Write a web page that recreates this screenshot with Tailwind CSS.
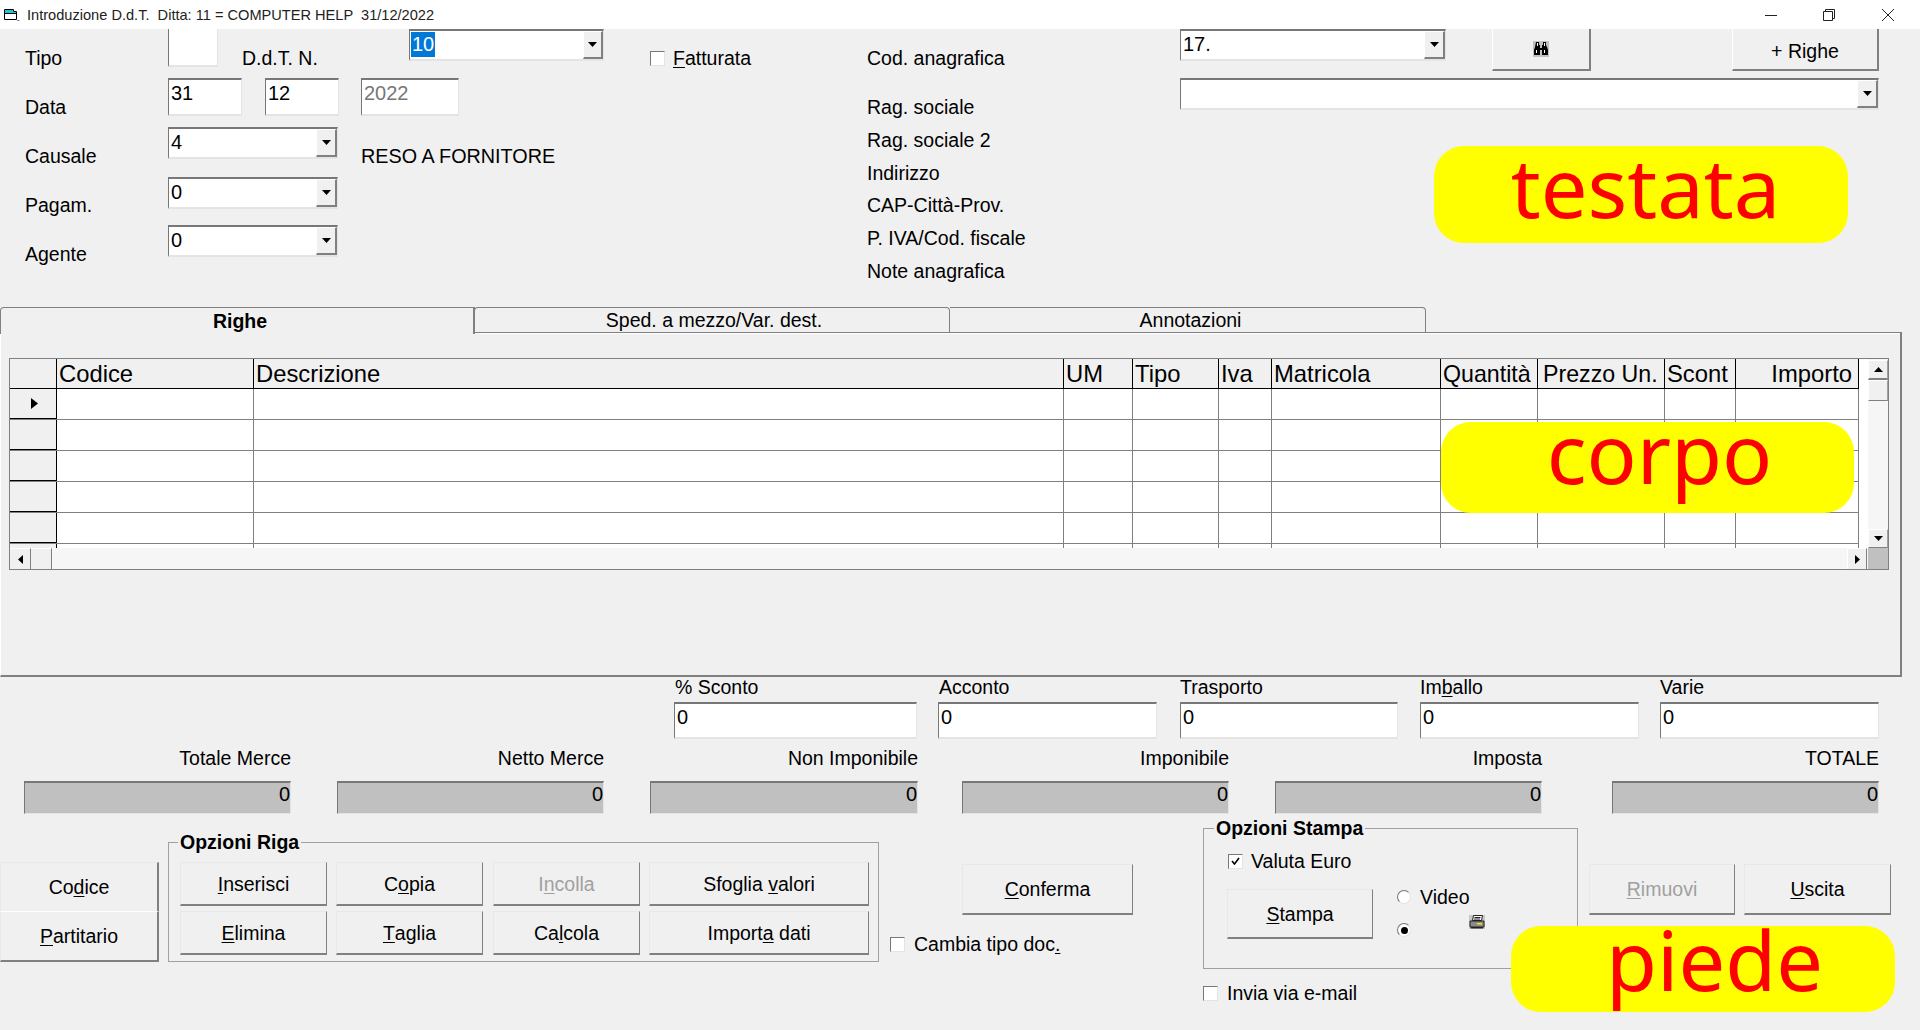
<!DOCTYPE html>
<html lang="it">
<head>
  <meta charset="UTF-8" />
  <title>Introduzione D.d.T.</title>
  <script src="https://cdn.jsdelivr.net/npm/@tailwindcss/browser@4"></script>
</head>
<body class="bg-[#f0f0f0]">
<div class="relative w-[1920px] h-[1030px] overflow-hidden bg-[#f0f0f0] text-black text-[19.5px] leading-[24px] font-['Liberation_Sans',sans-serif]">

  <!-- title bar -->
  <div class="flex items-center h-[29px] bg-white">
    <svg class="ml-[4px] w-[16px] h-[14px]" viewBox="0 0 16 14" fill="none">
      <path d="M.5 1.5v10h12v-8h-3v-2z" fill="#fff" stroke="#000"/>
      <path d="M1 2h8v2h3v1H1z" fill="#22c4d8"/>
      <path d="M1 5.5h11.5" stroke="#000"/>
      <path d="M13 12.5h2.5" stroke="#888"/>
    </svg>
    <span class="ml-[7px] text-[14.6px] text-[#222] whitespace-pre">Introduzione D.d.T.  Ditta: 11 = COMPUTER HELP  31/12/2022</span>
    <div class="ml-auto flex items-center h-full">
      <svg class="w-[14px] h-[14px] mr-[44px]" viewBox="0 0 14 14"><path d="M1 7.5h12" stroke="#222" stroke-width="1"/></svg>
      <svg class="w-[14px] h-[14px] mr-[45px]" viewBox="0 0 14 14" fill="none" stroke="#222"><path d="M1.5 3.5h9v9h-9zM3.5 3.5v-2h9v9h-2"/></svg>
      <svg class="w-[14px] h-[14px] mr-[25px]" viewBox="0 0 14 14" fill="none" stroke="#222"><path d="M1 1l12 12M13 1L1 13"/></svg>
    </div>
  </div>

  <!-- testata -->
  <div class="flex h-[278px]">
    <div class="w-[650px]">
      <div class="flex h-[49px] items-start">
        <div class="w-[168px] pl-[25px] pt-[17px]">Tipo</div>
        <div class="w-[50px] h-[38px] bg-white border-l border-b-2 border-r border-l-[#777] border-b-[#e4e4e4] border-r-[#e4e4e4]"></div>
        <div class="w-[167px] ml-[24px] pt-[17px]">D.d.T. N.</div>
        <div class="flex justify-between w-[195px] h-[32px] bg-white border-t-2 border-l border-b-2 border-r border-t-[#777] border-l-[#777] border-b-[#e4e4e4] border-r-[#e4e4e4]">
          <span class="mt-px ml-px px-px h-[25px] bg-[#0078d7] text-white text-[20px]">10</span>
          <div class="flex items-center justify-center w-[20px] bg-[#f0f0f0] border-t border-l border-r-2 border-b-2 border-t-white border-l-white border-r-[#808080] border-b-[#808080]">
            <svg class="w-[9px] h-[5px]" viewBox="0 0 9 5"><path d="M0 0h9L4.5 5z"/></svg>
          </div>
        </div>
      </div>
      <div class="flex h-[49px] items-start">
        <div class="w-[168px] pl-[25px] pt-[17px]">Data</div>
        <div class="w-[74px] h-[38px] pl-[2px] pt-[1px] text-[20px] bg-white border-t-2 border-l border-b-2 border-r border-t-[#777] border-l-[#777] border-b-[#e4e4e4] border-r-[#e4e4e4]">31</div>
        <div class="w-[74px] h-[38px] ml-[23px] pl-[2px] pt-[1px] text-[20px] bg-white border-t-2 border-l border-b-2 border-r border-t-[#777] border-l-[#777] border-b-[#e4e4e4] border-r-[#e4e4e4]">12</div>
        <div class="w-[98px] h-[38px] ml-[22px] pl-[2px] pt-[1px] text-[20px] bg-white text-[#777] border-t-2 border-l border-b-2 border-r border-t-[#777] border-l-[#777] border-b-[#e4e4e4] border-r-[#e4e4e4]">2022</div>
      </div>
      <div class="flex h-[50px] items-start">
        <div class="w-[168px] pl-[25px] pt-[17px]">Causale</div>
        <div class="flex justify-between w-[170px] h-[32px] pl-[2px] pt-[1px] text-[20px] bg-white border-t-2 border-l border-b-2 border-r border-t-[#777] border-l-[#777] border-b-[#e4e4e4] border-r-[#e4e4e4]">
          <span>4</span>
          <div class="flex items-center justify-center w-[21px] -mt-[1px] bg-[#f0f0f0] border-t border-l border-r-2 border-b-2 border-t-white border-l-white border-r-[#808080] border-b-[#808080]">
            <svg class="w-[9px] h-[5px]" viewBox="0 0 9 5"><path d="M0 0h9L4.5 5z"/></svg>
          </div>
        </div>
        <div class="ml-[23px] pt-[17px] text-[19.8px]">RESO A FORNITORE</div>
      </div>
      <div class="flex h-[48px] items-start">
        <div class="w-[168px] pl-[25px] pt-[16px]">Pagam.</div>
        <div class="flex justify-between w-[170px] h-[32px] pl-[2px] pt-[1px] text-[20px] bg-white border-t-2 border-l border-b-2 border-r border-t-[#777] border-l-[#777] border-b-[#e4e4e4] border-r-[#e4e4e4]">
          <span>0</span>
          <div class="flex items-center justify-center w-[21px] -mt-[1px] bg-[#f0f0f0] border-t border-l border-r-2 border-b-2 border-t-white border-l-white border-r-[#808080] border-b-[#808080]">
            <svg class="w-[9px] h-[5px]" viewBox="0 0 9 5"><path d="M0 0h9L4.5 5z"/></svg>
          </div>
        </div>
      </div>
      <div class="flex h-[49px] items-start">
        <div class="w-[168px] pl-[25px] pt-[17px]">Agente</div>
        <div class="flex justify-between w-[170px] h-[32px] pl-[2px] pt-[1px] text-[20px] bg-white border-t-2 border-l border-b-2 border-r border-t-[#777] border-l-[#777] border-b-[#e4e4e4] border-r-[#e4e4e4]">
          <span>0</span>
          <div class="flex items-center justify-center w-[21px] -mt-[1px] bg-[#f0f0f0] border-t border-l border-r-2 border-b-2 border-t-white border-l-white border-r-[#808080] border-b-[#808080]">
            <svg class="w-[9px] h-[5px]" viewBox="0 0 9 5"><path d="M0 0h9L4.5 5z"/></svg>
          </div>
        </div>
      </div>
    </div>

    <div class="flex items-start w-[217px] pt-[22px]">
      <span class="w-[15px] h-[15px] bg-white border border-t-[#777] border-l-[#777] border-b-[#e4e4e4] border-r-[#e4e4e4]"></span>
      <span class="ml-[8px] -mt-[5px]"><u class="underline-offset-2">F</u>atturata</span>
    </div>

    <div class="w-[313px] flex flex-col pt-[17px]">
      <div class="h-[49px]">Cod. anagrafica</div>
      <div class="h-[33px]">Rag. sociale</div>
      <div class="h-[33px]">Rag. sociale 2</div>
      <div class="h-[32px]">Indirizzo</div>
      <div class="h-[33px]">CAP-Città-Prov.</div>
      <div class="h-[33px]">P. IVA/Cod. fiscale</div>
      <div class="h-[33px]">Note anagrafica</div>
    </div>

    <div class="w-[700px]">
      <div class="flex items-start h-[49px]">
        <div class="flex justify-between w-[266px] h-[32px] pl-[2px] pt-[1px] text-[20px] bg-white border-t-2 border-l border-b-2 border-r border-t-[#777] border-l-[#777] border-b-[#e4e4e4] border-r-[#e4e4e4]">
          <span>17.</span>
          <div class="flex items-center justify-center w-[21px] -mt-[1px] bg-[#f0f0f0] border-t border-l border-r-2 border-b-2 border-t-white border-l-white border-r-[#808080] border-b-[#808080]">
            <svg class="w-[9px] h-[5px]" viewBox="0 0 9 5"><path d="M0 0h9L4.5 5z"/></svg>
          </div>
        </div>
        <div class="flex items-center justify-center w-[99px] h-[42px] ml-[46px] border-l border-r-2 border-b-2 border-l-white border-r-[#808080] border-b-[#808080]">
          <svg class="w-[16px] h-[16px] bg-[#c0c0c0]" viewBox="0 0 16 16">
            <path d="M3 1h3v3h1v3h2V4h1V1h3v3l1 2 1 3v5H9V9H7v5H1V9l1-3z"/>
            <path d="M4 2h1v3H4zM11 2h1v3h-1zM3 9h1v3H3zM11 9h1v3h-1z" fill="#fff"/>
          </svg>
        </div>
        <div class="flex items-center justify-center w-[147px] h-[42px] pt-[3px] ml-[141px] border-l border-r-2 border-b-2 border-l-white border-r-[#808080] border-b-[#808080]">+ Righe</div>
      </div>
      <div class="flex justify-end w-[699px] h-[32px] bg-white border-t-2 border-l border-b-2 border-r border-t-[#777] border-l-[#777] border-b-[#e4e4e4] border-r-[#e4e4e4]">
        <div class="flex items-center justify-center w-[21px] bg-[#f0f0f0] border-t border-l border-r-2 border-b-2 border-t-white border-l-white border-r-[#808080] border-b-[#808080]">
          <svg class="w-[9px] h-[5px]" viewBox="0 0 9 5"><path d="M0 0h9L4.5 5z"/></svg>
        </div>
      </div>
    </div>
  </div>

  <!-- tabs -->
  <div class="flex h-[25px]">
    <div class="relative z-10 flex justify-center w-[475px] h-[27px] pt-[1px] pl-[6px] font-bold bg-[#f0f0f0] border-t border-l border-r-2 border-t-[#808080] border-l-[#808080] border-r-[#808080] rounded-tl-[4px]">Righe</div>
    <div class="flex justify-center w-[476px] pl-[4px] border-t border-r border-l border-[#808080] rounded-t-[4px] -ml-px">Sped. a mezzo/Var. dest.</div>
    <div class="flex justify-center w-[476px] pl-[6px] border-t border-r border-[#808080] rounded-tr-[4px]">Annotazioni</div>
  </div>

  <!-- corpo -->
  <div class="w-[1902px] h-[345px] pt-[25px] pl-[8px] border-t border-r-2 border-b-2 border-l border-t-[#808080] border-r-[#808080] border-b-[#808080] border-l-white shadow-[inset_0_1px_0_#fff]">
    <div class="w-[1880px] h-[212px] border border-[#808080] flex flex-col">
      <div class="flex h-[189px]">
        <div class="w-[1858px] bg-white overflow-hidden text-[23.8px] leading-[30px]">
          <div class="grid w-[1849px] grid-cols-[47px_197px_810px_69px_86px_53px_169px_97px_127px_71px_123px] h-[30px] border-b border-black bg-[#f0f0f0]">
            <div class="border-r border-black"></div>
            <div class="border-r border-black pl-[2px]">Codice</div>
            <div class="border-r border-black pl-[2px]">Descrizione</div>
            <div class="border-r border-black pl-[2px]">UM</div>
            <div class="border-r border-black pl-[2px]">Tipo</div>
            <div class="border-r border-black pl-[2px]">Iva</div>
            <div class="border-r border-black pl-[2px]">Matricola</div>
            <div class="border-r border-black pl-[2px] text-[23.2px]">Quantità</div>
            <div class="border-r border-black pl-[5px] text-[23.2px]">Prezzo Un.</div>
            <div class="border-r border-black pl-[2px]">Scont</div>
            <div class="border-r border-black text-right pr-[6px]">Importo</div>
          </div>
          <div class="grid w-[1849px] grid-cols-[47px_197px_810px_69px_86px_53px_169px_97px_127px_71px_123px] h-[31px] border-b border-[#808080]">
            <div class="flex items-center justify-center pl-[2px] border-r border-b border-black bg-[#f0f0f0]">
              <svg class="w-[7px] h-[11px]" viewBox="0 0 7 11"><path d="M0 0l7 5.500-7 5.500z"/></svg>
            </div>
            <div class="border-r border-[#808080]"></div><div class="border-r border-[#808080]"></div><div class="border-r border-[#808080]"></div><div class="border-r border-[#808080]"></div><div class="border-r border-[#808080]"></div><div class="border-r border-[#808080]"></div><div class="border-r border-[#808080]"></div><div class="border-r border-[#808080]"></div><div class="border-r border-[#808080]"></div><div class="border-r border-[#808080]"></div>
          </div>
          <div class="grid w-[1849px] grid-cols-[47px_197px_810px_69px_86px_53px_169px_97px_127px_71px_123px] h-[31px] border-b border-[#808080]">
            <div class="border-r border-b border-black bg-[#f0f0f0]"></div>
            <div class="border-r border-[#808080]"></div><div class="border-r border-[#808080]"></div><div class="border-r border-[#808080]"></div><div class="border-r border-[#808080]"></div><div class="border-r border-[#808080]"></div><div class="border-r border-[#808080]"></div><div class="border-r border-[#808080]"></div><div class="border-r border-[#808080]"></div><div class="border-r border-[#808080]"></div><div class="border-r border-[#808080]"></div>
          </div>
          <div class="grid w-[1849px] grid-cols-[47px_197px_810px_69px_86px_53px_169px_97px_127px_71px_123px] h-[31px] border-b border-[#808080]">
            <div class="border-r border-b border-black bg-[#f0f0f0]"></div>
            <div class="border-r border-[#808080]"></div><div class="border-r border-[#808080]"></div><div class="border-r border-[#808080]"></div><div class="border-r border-[#808080]"></div><div class="border-r border-[#808080]"></div><div class="border-r border-[#808080]"></div><div class="border-r border-[#808080]"></div><div class="border-r border-[#808080]"></div><div class="border-r border-[#808080]"></div><div class="border-r border-[#808080]"></div>
          </div>
          <div class="grid w-[1849px] grid-cols-[47px_197px_810px_69px_86px_53px_169px_97px_127px_71px_123px] h-[31px] border-b border-[#808080]">
            <div class="border-r border-b border-black bg-[#f0f0f0]"></div>
            <div class="border-r border-[#808080]"></div><div class="border-r border-[#808080]"></div><div class="border-r border-[#808080]"></div><div class="border-r border-[#808080]"></div><div class="border-r border-[#808080]"></div><div class="border-r border-[#808080]"></div><div class="border-r border-[#808080]"></div><div class="border-r border-[#808080]"></div><div class="border-r border-[#808080]"></div><div class="border-r border-[#808080]"></div>
          </div>
          <div class="grid w-[1849px] grid-cols-[47px_197px_810px_69px_86px_53px_169px_97px_127px_71px_123px] h-[31px] border-b border-[#808080]">
            <div class="border-r border-b border-black bg-[#f0f0f0]"></div>
            <div class="border-r border-[#808080]"></div><div class="border-r border-[#808080]"></div><div class="border-r border-[#808080]"></div><div class="border-r border-[#808080]"></div><div class="border-r border-[#808080]"></div><div class="border-r border-[#808080]"></div><div class="border-r border-[#808080]"></div><div class="border-r border-[#808080]"></div><div class="border-r border-[#808080]"></div><div class="border-r border-[#808080]"></div>
          </div>
          <div class="grid w-[1849px] grid-cols-[47px_197px_810px_69px_86px_53px_169px_97px_127px_71px_123px] h-[31px]">
            <div class="border-r border-black bg-[#f0f0f0]"></div>
            <div class="border-r border-[#808080]"></div><div class="border-r border-[#808080]"></div><div class="border-r border-[#808080]"></div><div class="border-r border-[#808080]"></div><div class="border-r border-[#808080]"></div><div class="border-r border-[#808080]"></div><div class="border-r border-[#808080]"></div><div class="border-r border-[#808080]"></div><div class="border-r border-[#808080]"></div><div class="border-r border-[#808080]"></div>
          </div>
        </div>
        <div class="flex flex-col w-[20px] bg-[#f6f6f6]">
          <div class="flex items-center justify-center h-[20px] mt-px bg-[#f0f0f0] border-t border-l border-r border-b-2 border-t-white border-l-white border-r-[#a0a0a0] border-b-[#808080]">
            <svg class="w-[9px] h-[5px]" viewBox="0 0 9 5"><path d="M0 5h9L4.5 0z"/></svg>
          </div>
          <div class="h-[21px] bg-[#f0f0f0] border-t border-l border-r border-b border-t-white border-l-white border-r-[#a0a0a0] border-b-[#808080]"></div>
          <div class="flex items-center justify-center h-[19px] mt-auto bg-[#f0f0f0] border-t border-l border-r border-b border-t-white border-l-white border-r-[#a0a0a0] border-b-[#808080]">
            <svg class="w-[9px] h-[5px]" viewBox="0 0 9 5"><path d="M0 0h9L4.5 5z"/></svg>
          </div>
        </div>
      </div>
      <div class="flex h-[21px] bg-[#f6f6f6]">
        <div class="flex items-center justify-center w-[21px] bg-[#f0f0f0] border-t border-r border-t-white border-r-[#808080]">
          <svg class="w-[5px] h-[9px]" viewBox="0 0 5 9"><path d="M5 0v9L0 4.500z"/></svg>
        </div>
        <div class="w-[21px] bg-[#f0f0f0] border-t border-r border-t-white border-r-[#808080]"></div>
        <div class="flex items-center justify-center w-[20px] ml-auto bg-[#f0f0f0] border-t border-l border-r border-t-white border-l-white border-r-[#808080]">
          <svg class="w-[5px] h-[9px]" viewBox="0 0 5 9"><path d="M0 0v9l5-4.500z"/></svg>
        </div>
        <div class="w-[20px] bg-[#c0c0c0] ml-px"></div>
      </div>
    </div>
  </div>

  <!-- piede: campi -->
  <div class="flex pl-[674px]">
    <div class="w-[243px]">
      <div class="h-[21px] leading-[21px] pl-px">% Sconto</div>
      <div class="h-[37px] mt-[4px] pl-[2px] pt-[1px] text-[20px] bg-white border-t-2 border-l border-b-2 border-r border-t-[#777] border-l-[#777] border-b-[#e4e4e4] border-r-[#e4e4e4]">0</div>
    </div>
    <div class="w-[219px] ml-[21px]">
      <div class="h-[21px] leading-[21px] pl-px">Acconto</div>
      <div class="h-[37px] mt-[4px] pl-[2px] pt-[1px] text-[20px] bg-white border-t-2 border-l border-b-2 border-r border-t-[#777] border-l-[#777] border-b-[#e4e4e4] border-r-[#e4e4e4]">0</div>
    </div>
    <div class="w-[218px] ml-[23px]">
      <div class="h-[21px] leading-[21px]">Trasporto</div>
      <div class="h-[37px] mt-[4px] pl-[2px] pt-[1px] text-[20px] bg-white border-t-2 border-l border-b-2 border-r border-t-[#777] border-l-[#777] border-b-[#e4e4e4] border-r-[#e4e4e4]">0</div>
    </div>
    <div class="w-[219px] ml-[22px]">
      <div class="h-[21px] leading-[21px]">Im<u class="underline-offset-2">b</u>allo</div>
      <div class="h-[37px] mt-[4px] pl-[2px] pt-[1px] text-[20px] bg-white border-t-2 border-l border-b-2 border-r border-t-[#777] border-l-[#777] border-b-[#e4e4e4] border-r-[#e4e4e4]">0</div>
    </div>
    <div class="w-[219px] ml-[21px]">
      <div class="h-[21px] leading-[21px]">Varie</div>
      <div class="h-[37px] mt-[4px] pl-[2px] pt-[1px] text-[20px] bg-white border-t-2 border-l border-b-2 border-r border-t-[#777] border-l-[#777] border-b-[#e4e4e4] border-r-[#e4e4e4]">0</div>
    </div>
  </div>

  <!-- piede: totali -->
  <div class="flex pl-[24px] mt-[7px]">
    <div class="w-[267px]">
      <div class="text-right">Totale Merce</div>
      <div class="h-[33px] mt-[11px] text-right text-[20px] leading-[22px] bg-[#c0c0c0] border-t-2 border-l border-b border-r border-t-[#777] border-l-[#777] border-b-[#e4e4e4] border-r-[#e4e4e4]">0</div>
    </div>
    <div class="w-[267px] ml-[46px]">
      <div class="text-right">Netto Merce</div>
      <div class="h-[33px] mt-[11px] text-right text-[20px] leading-[22px] bg-[#c0c0c0] border-t-2 border-l border-b border-r border-t-[#777] border-l-[#777] border-b-[#e4e4e4] border-r-[#e4e4e4]">0</div>
    </div>
    <div class="w-[268px] ml-[46px]">
      <div class="text-right">Non Imponibile</div>
      <div class="h-[33px] mt-[11px] text-right text-[20px] leading-[22px] bg-[#c0c0c0] border-t-2 border-l border-b border-r border-t-[#777] border-l-[#777] border-b-[#e4e4e4] border-r-[#e4e4e4]">0</div>
    </div>
    <div class="w-[267px] ml-[44px]">
      <div class="text-right">Imponibile</div>
      <div class="h-[33px] mt-[11px] text-right text-[20px] leading-[22px] bg-[#c0c0c0] border-t-2 border-l border-b border-r border-t-[#777] border-l-[#777] border-b-[#e4e4e4] border-r-[#e4e4e4]">0</div>
    </div>
    <div class="w-[267px] ml-[46px]">
      <div class="text-right">Imposta</div>
      <div class="h-[33px] mt-[11px] text-right text-[20px] leading-[22px] bg-[#c0c0c0] border-t-2 border-l border-b border-r border-t-[#777] border-l-[#777] border-b-[#e4e4e4] border-r-[#e4e4e4]">0</div>
    </div>
    <div class="w-[267px] ml-[70px]">
      <div class="text-right">TOTALE</div>
      <div class="h-[33px] mt-[11px] text-right text-[20px] leading-[22px] bg-[#c0c0c0] border-t-2 border-l border-b border-r border-t-[#777] border-l-[#777] border-b-[#e4e4e4] border-r-[#e4e4e4]">0</div>
    </div>
  </div>

  <!-- piede: pulsanti -->
  <div class="flex items-start">
    <div class="w-[159px] mt-[48px]">
      <div class="flex items-center justify-center h-[50px] border-t border-l border-r-2 border-b border-t-[#e8e8e8] border-l-[#e8e8e8] border-r-[#808080] border-b-white">Co<u class="underline-offset-2">d</u>ice</div>
      <div class="flex items-center justify-center h-[50px] border-l border-r-2 border-b-2 border-l-[#e8e8e8] border-r-[#808080] border-b-[#808080]"><u class="underline-offset-2">P</u>artitario</div>
    </div>

    <div class="relative w-[711px] h-[120px] ml-[9px] mt-[28px] pl-[11px] pt-[19px] border border-[#a0a0a0]">
      <span class="absolute left-[9px] -top-[13px] px-[2px] bg-[#f0f0f0] font-bold">Opzioni Riga</span>
      <div class="grid grid-cols-[147px_148px_147px_220px] grid-rows-[44px_44px] gap-x-[9px] gap-y-[5px]">
        <div class="flex items-center justify-center border-t border-l border-r border-b-2 border-t-[#e8e8e8] border-l-[#e8e8e8] border-r-[#808080] border-b-[#808080]"><u class="underline-offset-2">I</u>nserisci</div>
        <div class="flex items-center justify-center w-[147px] border-t border-l border-r border-b-2 border-t-[#e8e8e8] border-l-[#e8e8e8] border-r-[#808080] border-b-[#808080]">C<u class="underline-offset-2">o</u>pia</div>
        <div class="flex items-center justify-center text-[#a0a0a0] border-t border-l border-r border-b-2 border-t-[#e8e8e8] border-l-[#e8e8e8] border-r-[#808080] border-b-[#808080]">I<u class="underline-offset-2">n</u>colla</div>
        <div class="flex items-center justify-center border-t border-l border-r border-b-2 border-t-[#e8e8e8] border-l-[#e8e8e8] border-r-[#808080] border-b-[#808080]">Sfoglia&nbsp;<u class="underline-offset-2">v</u>alori</div>
        <div class="flex items-center justify-center border-t border-l border-r border-b-2 border-t-[#e8e8e8] border-l-[#e8e8e8] border-r-[#808080] border-b-[#808080]"><u class="underline-offset-2">E</u>limina</div>
        <div class="flex items-center justify-center w-[147px] border-t border-l border-r border-b-2 border-t-[#e8e8e8] border-l-[#e8e8e8] border-r-[#808080] border-b-[#808080]"><u class="underline-offset-2">T</u>aglia</div>
        <div class="flex items-center justify-center border-t border-l border-r border-b-2 border-t-[#e8e8e8] border-l-[#e8e8e8] border-r-[#808080] border-b-[#808080]">Ca<u class="underline-offset-2">l</u>cola</div>
        <div class="flex items-center justify-center border-t border-l border-r border-b-2 border-t-[#e8e8e8] border-l-[#e8e8e8] border-r-[#808080] border-b-[#808080]">Import<u class="underline-offset-2">a</u>&nbsp;dati</div>
      </div>
    </div>

    <div class="w-[324px] mt-[50px] pl-[11px]">
      <div class="flex items-center justify-center w-[171px] h-[51px] ml-[72px] border-t border-l border-r border-b-2 border-t-[#e8e8e8] border-l-[#e8e8e8] border-r-[#808080] border-b-[#808080]"><u class="underline-offset-2">C</u>onferma</div>
      <div class="flex items-center mt-[17px] h-[24px]">
        <span class="w-[15px] h-[15px] bg-white border border-t-[#777] border-l-[#777] border-b-[#e4e4e4] border-r-[#e4e4e4]"></span>
        <span class="ml-[9px]">Cambia tipo doc<u class="underline-offset-2">.</u></span>
      </div>
    </div>

    <div class="w-[386px] mt-[14px]">
      <div class="relative w-[375px] h-[141px] pt-[20px] pl-[24px] border border-[#a0a0a0]">
        <span class="absolute left-[10px] -top-[13px] px-[2px] bg-[#f0f0f0] font-bold">Opzioni Stampa</span>
        <div class="flex items-center h-[24px]">
          <span class="flex items-center justify-center w-[15px] h-[15px] bg-white border border-t-[#777] border-l-[#777] border-b-[#e4e4e4] border-r-[#e4e4e4]">
            <svg class="w-[9px] h-[8px]" viewBox="0 0 9 8" fill="none" stroke="#000" stroke-width="1.6"><path d="M1 4l2.500 3L8 1"/></svg>
          </span>
          <span class="ml-[8px]">Valuta Euro</span>
        </div>
        <div class="flex items-start mt-[16px]">
          <div class="flex items-center justify-center w-[146px] h-[50px] -ml-px border-t border-l border-r border-b-2 border-t-[#e8e8e8] border-l-[#e8e8e8] border-r-[#808080] border-b-[#808080]"><u class="underline-offset-2">S</u>tampa</div>
          <div class="ml-[24px]">
            <div class="flex items-center h-[16px]">
              <span class="w-[14px] h-[14px] rounded-full bg-white border border-t-[#777] border-l-[#777] border-b-[#e4e4e4] border-r-[#e4e4e4]"></span>
              <span class="ml-[9px]">Video</span>
            </div>
            <div class="flex items-center h-[16px] mt-[17px]">
              <span class="flex items-center justify-center w-[14px] h-[14px] rounded-full bg-white border border-t-[#777] border-l-[#777] border-b-[#e4e4e4] border-r-[#e4e4e4]">
                <span class="w-[7px] h-[7px] rounded-full bg-black"></span>
              </span>
              <svg class="w-[16px] h-[14px] ml-[58px] -mt-[16px] bg-[#c8c8c8]" viewBox="0 0 16 14">
                <path d="M4.500.5h9l-1 5h-9z" fill="#fff" stroke="#222"/>
                <path d="M1 6h14v6H1z" fill="#8a8a8a" stroke="#222"/>
                <path d="M5.500 2.500h6M5 4h6" stroke="#222"/>
                <path d="M8 8h5v1.500H8z" fill="#f0e020"/>
                <path d="M2 12h12v1.500H2z" fill="#222"/>
              </svg>
            </div>
          </div>
        </div>
      </div>
      <div class="flex items-center mt-[12px] h-[24px]">
        <span class="w-[15px] h-[15px] bg-white border border-t-[#777] border-l-[#777] border-b-[#e4e4e4] border-r-[#e4e4e4]"></span>
        <span class="ml-[9px]">Invia via e-mail</span>
      </div>
    </div>

    <div class="flex mt-[50px] gap-x-[9px]">
      <div class="flex items-center justify-center w-[146px] h-[51px] text-[#a0a0a0] border-t border-l border-r border-b-2 border-t-[#e8e8e8] border-l-[#e8e8e8] border-r-[#808080] border-b-[#808080]"><u class="underline-offset-2">R</u>imuovi</div>
      <div class="flex items-center justify-center w-[147px] h-[51px] border-t border-l border-r border-b-2 border-t-[#e8e8e8] border-l-[#e8e8e8] border-r-[#808080] border-b-[#808080]"><u class="underline-offset-2">U</u>scita</div>
    </div>
  </div>

  <!-- etichette gialle -->
  <div class="absolute left-[1434px] top-[146px] flex items-center justify-center w-[414px] h-[97px] pl-[9px] pb-[18px] rounded-[30px] bg-[#ffff00] text-[#ff0000] text-[83px] leading-none font-['Noto_Sans',sans-serif]">testata</div>
  <div class="absolute left-[1441px] top-[422px] flex items-center justify-center w-[413px] h-[91px] pl-[24px] pb-[32px] rounded-[30px] bg-[#ffff00] text-[#ff0000] text-[83px] leading-none font-['Noto_Sans',sans-serif]">corpo</div>
  <div class="absolute left-[1511px] top-[926px] flex items-center justify-center w-[384px] h-[86px] pl-[23px] pb-[22px] rounded-[30px] bg-[#ffff00] text-[#ff0000] text-[83px] leading-none font-['Noto_Sans',sans-serif]">piede</div>
</div>
</body>
</html>
